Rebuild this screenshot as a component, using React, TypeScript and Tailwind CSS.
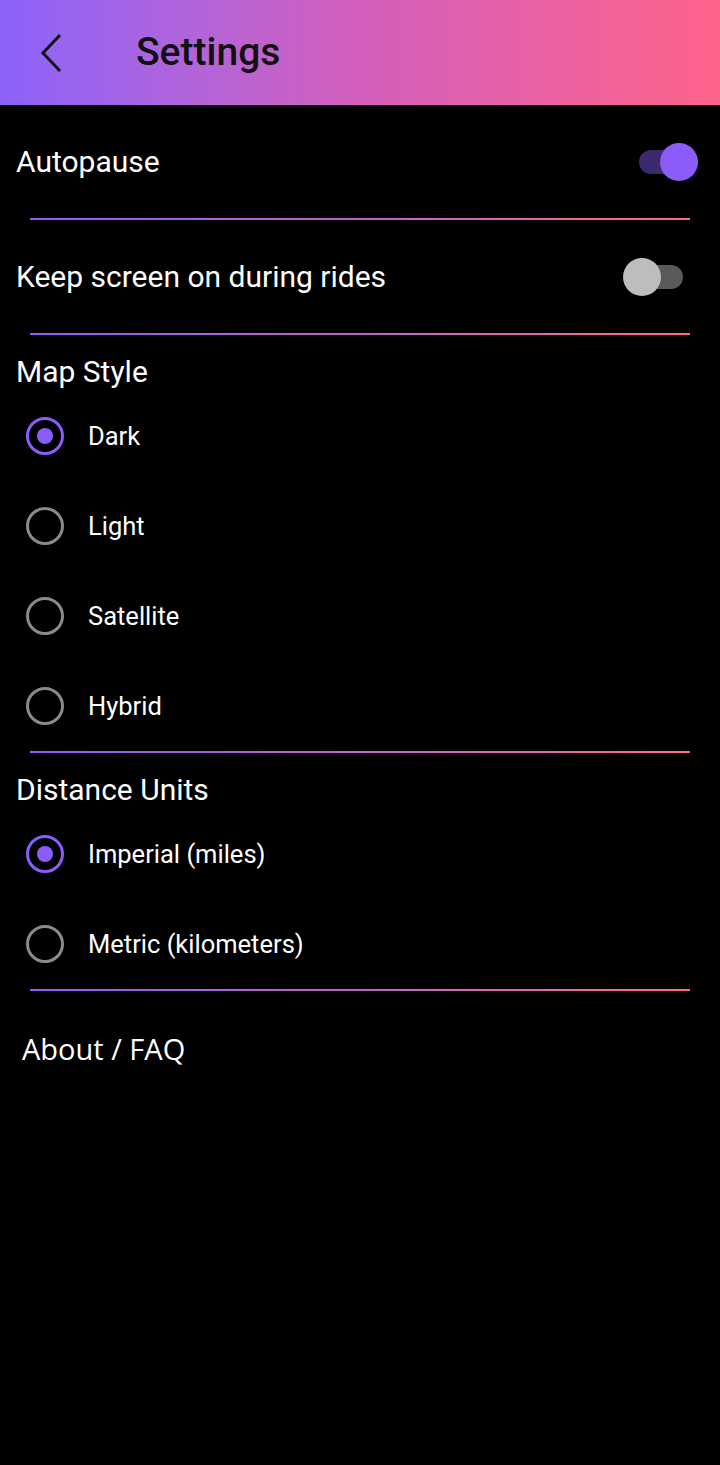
import { useState } from "react";

const font = { fontFamily: "Roboto, 'Noto Sans', sans-serif" };

function Divider() {
  return <div className="mx-[30px] h-[2px] bg-gradient-to-r from-[#8c5cf6] via-[#c062c6] to-[#ff6a88]" />;
}

function Toggle({ on, onClick }: { on: boolean; onClick: () => void }) {
  return (
    <button onClick={onClick} className="relative w-[60px] h-[40px] shrink-0">
      <span className={`absolute top-[8px] h-[24px] w-[51px] rounded-full ${on ? "left-[1px] bg-[#3b2a6e]" : "left-[-6px] bg-[#5a5a5a]"}`} />
      <span className={`absolute top-[1px] h-[38px] w-[38px] rounded-full ${on ? "right-0 bg-[#8c5cfa]" : "left-[-15px] bg-[#bdbdbd]"}`} />
    </button>
  );
}

function Radio({ label, checked, onClick }: { label: string; checked: boolean; onClick: () => void }) {
  return (
    <button onClick={onClick} className="flex items-center h-[90px] w-full pl-[26px] text-left">
      <span className={`flex items-center justify-center w-[38px] h-[38px] rounded-full border-[3px] ${checked ? "border-[#8c5cfa]" : "border-[#8a8a8a]"}`}>
        {checked && <span className="w-[16px] h-[16px] rounded-full bg-[#8c5cfa]" />}
      </span>
      <span className="ml-[24px] text-[25.5px] text-white">{label}</span>
    </button>
  );
}

export default function App() {
  const [autopause, setAutopause] = useState(true);
  const [screenOn, setScreenOn] = useState(false);
  const [mapStyle, setMapStyle] = useState("Dark");
  const [units, setUnits] = useState("Imperial (miles)");

  return (
    <div className="min-h-[1465px] w-[720px] bg-black text-white" style={font}>
      <header className="h-[105px] flex items-center bg-gradient-to-r from-[#8b62fb] via-[#d35ebb] to-[#ff6289]">
        <button className="ml-[36px] w-[32px] h-[44px] flex items-center justify-center">
          <svg width="28" height="40" viewBox="0 0 28 40" fill="none" stroke="#111" strokeWidth="3">
            <polyline points="22,2 5,20 22,38" />
          </svg>
        </button>
        <h1 className="ml-[68px] text-[39px] font-medium text-[#111] leading-none">Settings</h1>
      </header>

      <div className="h-[113px] flex items-center justify-between pl-[16px] pr-[22px]">
        <span className="text-[30px]">Autopause</span>
        <Toggle on={autopause} onClick={() => setAutopause(!autopause)} />
      </div>
      <Divider />
      <div className="h-[113px] flex items-center justify-between pl-[16px] pr-[22px]">
        <span className="text-[30px]">Keep screen on during rides</span>
        <Toggle on={screenOn} onClick={() => setScreenOn(!screenOn)} />
      </div>
      <Divider />

      <div className="h-[56px] pt-[20px] pl-[16px] text-[30px] leading-[34px]">Map Style</div>
      {["Dark", "Light", "Satellite", "Hybrid"].map((s) => (
        <Radio key={s} label={s} checked={mapStyle === s} onClick={() => setMapStyle(s)} />
      ))}
      <Divider />

      <div className="h-[56px] pt-[20px] pl-[16px] text-[30px] leading-[34px]">Distance Units</div>
      {["Imperial (miles)", "Metric (kilometers)"].map((s) => (
        <Radio key={s} label={s} checked={units === s} onClick={() => setUnits(s)} />
      ))}
      <Divider />

      <button className="block pl-[22px] pt-[38px] text-[29px] leading-[40px]" style={{ fontFamily: "'Open Sans', sans-serif" }}>
        About / FAQ
      </button>
    </div>
  );
}
